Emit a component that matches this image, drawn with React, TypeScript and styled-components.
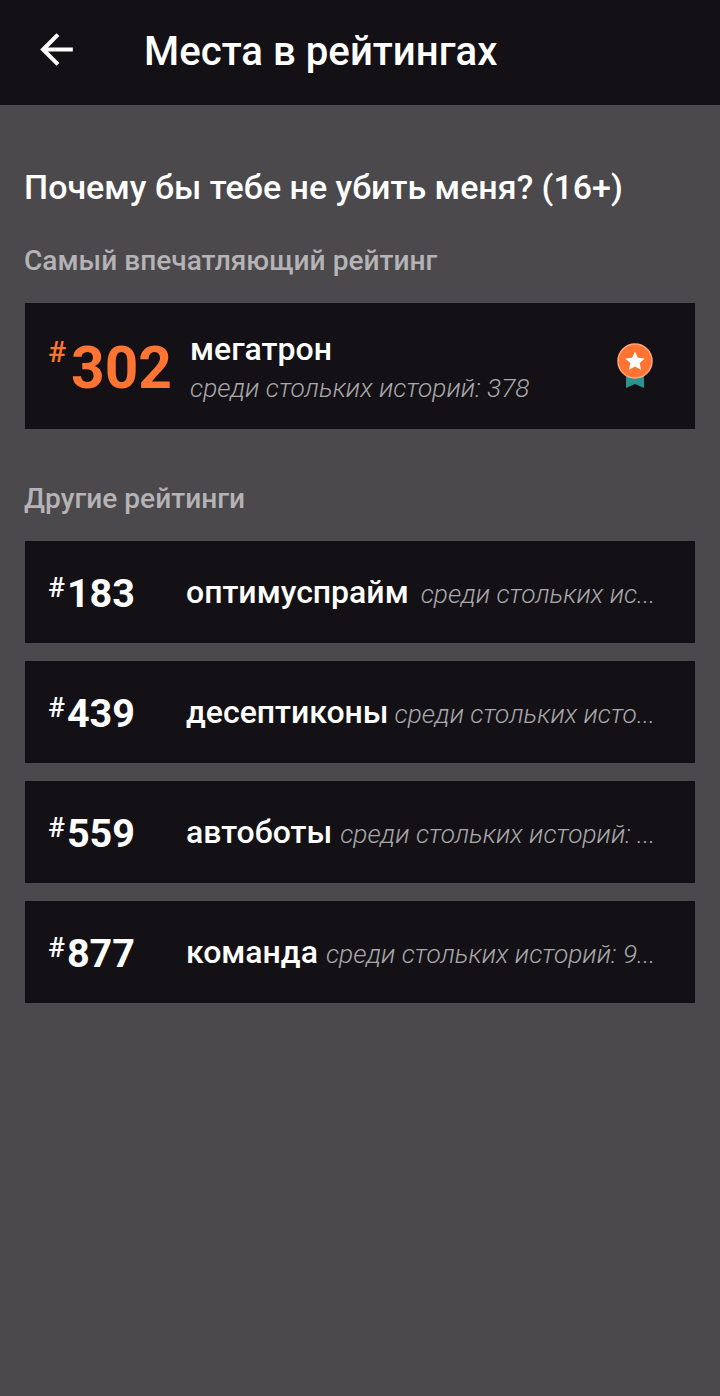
import React from 'react';
import styled, { createGlobalStyle } from 'styled-components';

const GlobalStyle = createGlobalStyle`
  html, body { margin: 0; padding: 0; background: #4b494c; }
  body { font-family: Roboto, "Noto Sans", sans-serif; }
`;

const Page = styled.div`
  width: 720px;
  height: 1396px;
  background: #4b494c;
  overflow: hidden;
`;

const Header = styled.header`
  height: 105px;
  background: #131115;
  display: flex;
  align-items: center;
  padding-left: 32px;
  padding-bottom: 2px;
  box-sizing: border-box;
  color: #fff;
`;

const BackIcon = styled.svg`
  width: 49px;
  height: 49px;
  flex: none;
  margin-bottom: 5px;
  fill: currentColor;
`;

const Title = styled.h1`
  margin: 0 0 0 63px;
  font-size: 40.2px;
  font-weight: 500;
  color: #fff;
`;

const Content = styled.main`
  padding: 62px 25px 0;
`;

const StoryName = styled.h2`
  margin: 0 0 0 -1px;
  font-size: 34px;
  line-height: 40px;
  font-weight: 500;
  color: #fff;
`;

const SectionLabel = styled.h3<{ $top: number }>`
  margin: ${(p) => p.$top}px 0 0 -1px;
  font-size: 28.1px;
  line-height: 34px;
  font-weight: 500;
  color: #b5b3b6;
`;

const TopCard = styled.div`
  margin-top: 25px;
  height: 126px;
  background: #131115;
  display: flex;
  align-items: center;
  padding: 0 41px 0 23px;
  box-sizing: border-box;
`;

const TopRank = styled.div`
  width: 142px;
  flex: none;
  display: flex;
  align-items: flex-start;
  color: #ff7433;
  font-weight: 700;
`;

const Hash = styled.span<{ $big?: boolean }>`
  font-size: ${(p) => (p.$big ? 30 : 28)}px;
  line-height: 1;
  font-weight: 500;
  margin-top: ${(p) => (p.$big ? 2 : 5)}px;
`;

const TopNumber = styled.span`
  font-size: 58.6px;
  line-height: 58px;
  margin-top: 4px;
  margin-left: 5px;
`;

const TopText = styled.div`
  flex: 1;
  min-width: 0;
  padding-top: 4px;
`;

const RatingName = styled.div`
  font-size: 32px;
  line-height: 36px;
  font-weight: 500;
  color: #fff;
`;

const Count = styled.span`
  font-size: 26.3px;
  font-weight: 300;
  font-style: italic;
  color: #aaa8ab;
`;

const TopCount = styled(Count)`
  display: block;
  line-height: 36px;
  margin-top: 3px;
`;

const List = styled.div`
  margin-top: 25px;
  display: flex;
  flex-direction: column;
  gap: 18px;
`;

const Row = styled.div`
  height: 102px;
  background: #131115;
  display: flex;
  align-items: center;
  padding: 0 40px 0 23px;
  box-sizing: border-box;
  color: #fff;
`;

const RowRank = styled.div`
  width: 138px;
  flex: none;
  display: flex;
  align-items: flex-start;
  font-weight: 700;
`;

const RowNumber = styled.span`
  font-size: 39.6px;
  line-height: 42px;
  margin-top: 4px;
  margin-left: 2px;
`;

const RowText = styled.div`
  flex: 1;
  min-width: 0;
  white-space: nowrap;
  color: #aaa8ab;
`;

const RowName = styled.span<{ $gap: number }>`
  font-size: 32px;
  font-weight: 500;
  color: #fff;
  margin-right: ${(p) => p.$gap}px;
`;

const others = [
  { rank: 183, name: 'оптимуспрайм', gap: 12, count: 'среди стольких ис...' },
  { rank: 439, name: 'десептиконы', gap: 6, count: 'среди стольких исто...' },
  { rank: 559, name: 'автоботы', gap: 8, count: 'среди стольких историй: ...' },
  { rank: 877, name: 'команда', gap: 8, count: 'среди стольких историй: 9...' },
];

function Medal() {
  return (
    <svg width="38" height="48" viewBox="0 0 38 48" aria-hidden="true">
      <path d="M10 28h18v18l-9-4-9 4z" fill="#2a9490" />
      <circle cx="19" cy="19" r="17" fill="#ff7433" stroke="#ffa67d" strokeWidth="1.5" />
      <path d="M19 9.5l2.9 6.2 6.8.8-5 4.6 1.3 6.7-6-3.3-6 3.3 1.3-6.7-5-4.6 6.8-.8z" fill="#fff" />
    </svg>
  );
}

export default function App() {
  return (
    <Page>
      <GlobalStyle />
      <Header>
        <BackIcon viewBox="0 0 24 24" aria-hidden="true">
          <path d="M20 11H7.83l5.59-5.59L12 4l-8 8 8 8 1.41-1.41L7.83 13H20v-2z" />
        </BackIcon>
        <Title>Места в рейтингах</Title>
      </Header>
      <Content>
        <StoryName>Почему бы тебе не убить меня? (16+)</StoryName>
        <SectionLabel $top={37}>Самый впечатляющий рейтинг</SectionLabel>
        <TopCard>
          <TopRank>
            <Hash $big>#</Hash>
            <TopNumber>302</TopNumber>
          </TopRank>
          <TopText>
            <RatingName>мегатрон</RatingName>
            <TopCount>среди стольких историй: 378</TopCount>
          </TopText>
          <Medal />
        </TopCard>
        <SectionLabel $top={53}>Другие рейтинги</SectionLabel>
        <List>
          {others.map((o) => (
            <Row key={o.rank}>
              <RowRank>
                <Hash>#</Hash>
                <RowNumber>{o.rank}</RowNumber>
              </RowRank>
              <RowText>
                <RowName $gap={o.gap}>{o.name}</RowName>
                <Count>{o.count}</Count>
              </RowText>
            </Row>
          ))}
        </List>
      </Content>
    </Page>
  );
}
